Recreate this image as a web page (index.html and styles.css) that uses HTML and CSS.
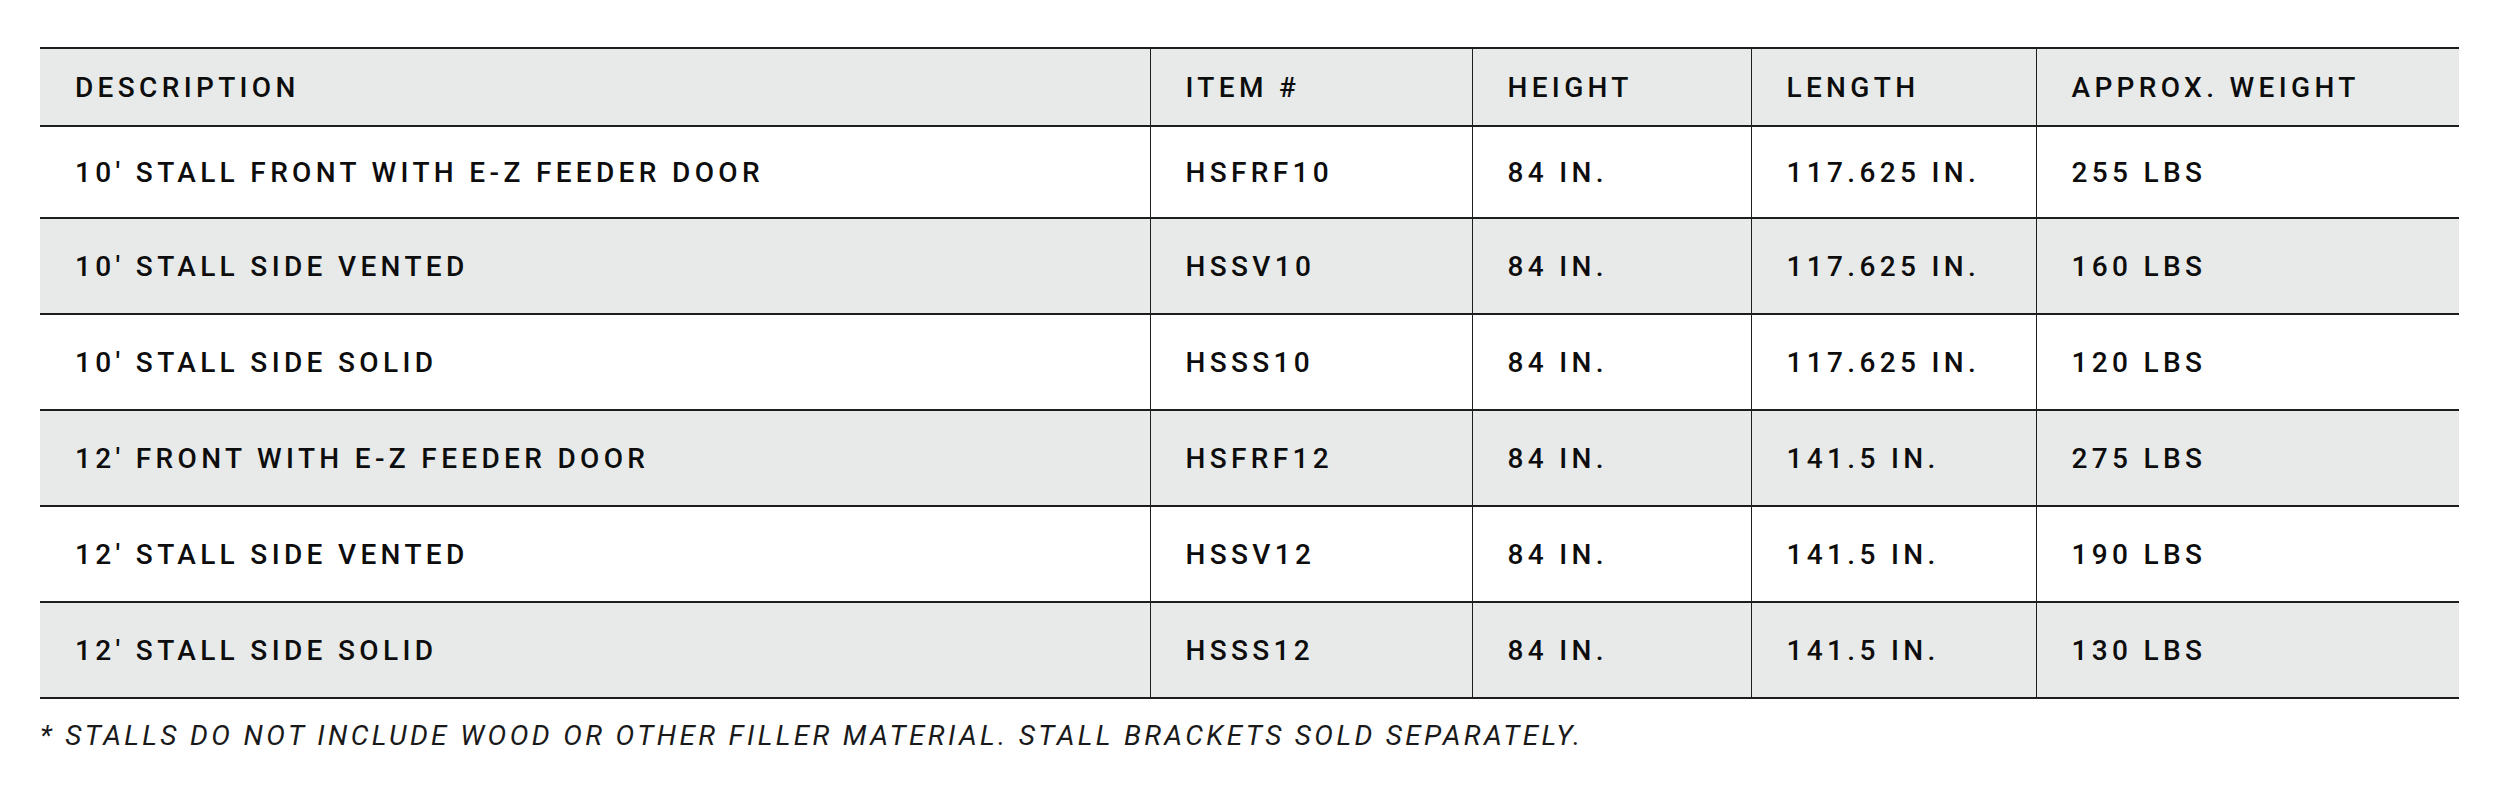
FILE: index.html
```html
<!DOCTYPE html>
<html>
<head>
<meta charset="utf-8">
<link rel="stylesheet" href="styles.css">
</head>
<body>
<div class="wrap">
  <table class="spec">
    <colgroup>
      <col class="c1"><col class="c2"><col class="c3"><col class="c4"><col class="c5">
    </colgroup>
    <thead>
      <tr class="head">
        <th>DESCRIPTION</th><th>ITEM #</th><th>HEIGHT</th><th>LENGTH</th><th>APPROX. WEIGHT</th>
      </tr>
    </thead>
    <tbody>
      <tr class="first"><td>10' STALL FRONT WITH E-Z FEEDER DOOR</td><td>HSFRF10</td><td>84 IN.</td><td>117.625 IN.</td><td>255 LBS</td></tr>
      <tr class="alt"><td>10' STALL SIDE VENTED</td><td>HSSV10</td><td>84 IN.</td><td>117.625 IN.</td><td>160 LBS</td></tr>
      <tr><td>10' STALL SIDE SOLID</td><td>HSSS10</td><td>84 IN.</td><td>117.625 IN.</td><td>120 LBS</td></tr>
      <tr class="alt"><td>12' FRONT WITH E-Z FEEDER DOOR</td><td>HSFRF12</td><td>84 IN.</td><td>141.5 IN.</td><td>275 LBS</td></tr>
      <tr><td>12' STALL SIDE VENTED</td><td>HSSV12</td><td>84 IN.</td><td>141.5 IN.</td><td>190 LBS</td></tr>
      <tr class="alt"><td>12' STALL SIDE SOLID</td><td>HSSS12</td><td>84 IN.</td><td>141.5 IN.</td><td>130 LBS</td></tr>
    </tbody>
  </table>
  <p class="note">* STALLS DO NOT INCLUDE WOOD OR OTHER FILLER MATERIAL. STALL BRACKETS SOLD SEPARATELY.</p>
</div>
</body>
</html>
```

FILE: styles.css
```css
html, body {
  margin: 0;
  padding: 0;
  background: #ffffff;
}
body {
  font-family: Roboto, "Liberation Sans", Arial, sans-serif;
  color: #0d0d0d;
}
.wrap {
  padding: 47px 41px 0 40px;
}
.spec {
  width: 2419px;
  border-collapse: collapse;
  table-layout: fixed;
}
.c1 { width: 1110px; }
.c2 { width: 322px; }
.c3 { width: 279px; }
.c4 { width: 285px; }
.c5 { width: 423px; }
.spec th, .spec td {
  font-size: 28px;
  font-weight: 500;
  letter-spacing: 0.155em;
  text-align: left;
  padding: 0 0 0 35px;
  vertical-align: middle;
  border-top: 2px solid #1e1e1e;
  border-bottom: 2px solid #1e1e1e;
  border-left: 1.5px solid #1e1e1e;
  border-right: 1.5px solid #1e1e1e;
  white-space: nowrap;
}
.spec th:first-child, .spec td:first-child { border-left: none; }
.spec th:last-child, .spec td:last-child { border-right: none; }
.head th {
  height: 76px;
  background: #e7eae9;
}
.spec td { height: 94px; }
.spec .first td { height: 90px; }
.alt td { background: #e7eae9; }
.note {
  margin: 20px 0 0 0;
  font-size: 28px;
  font-style: italic;
  font-weight: 400;
  letter-spacing: 0.12em;
  color: #1a1a1a;
}
```
